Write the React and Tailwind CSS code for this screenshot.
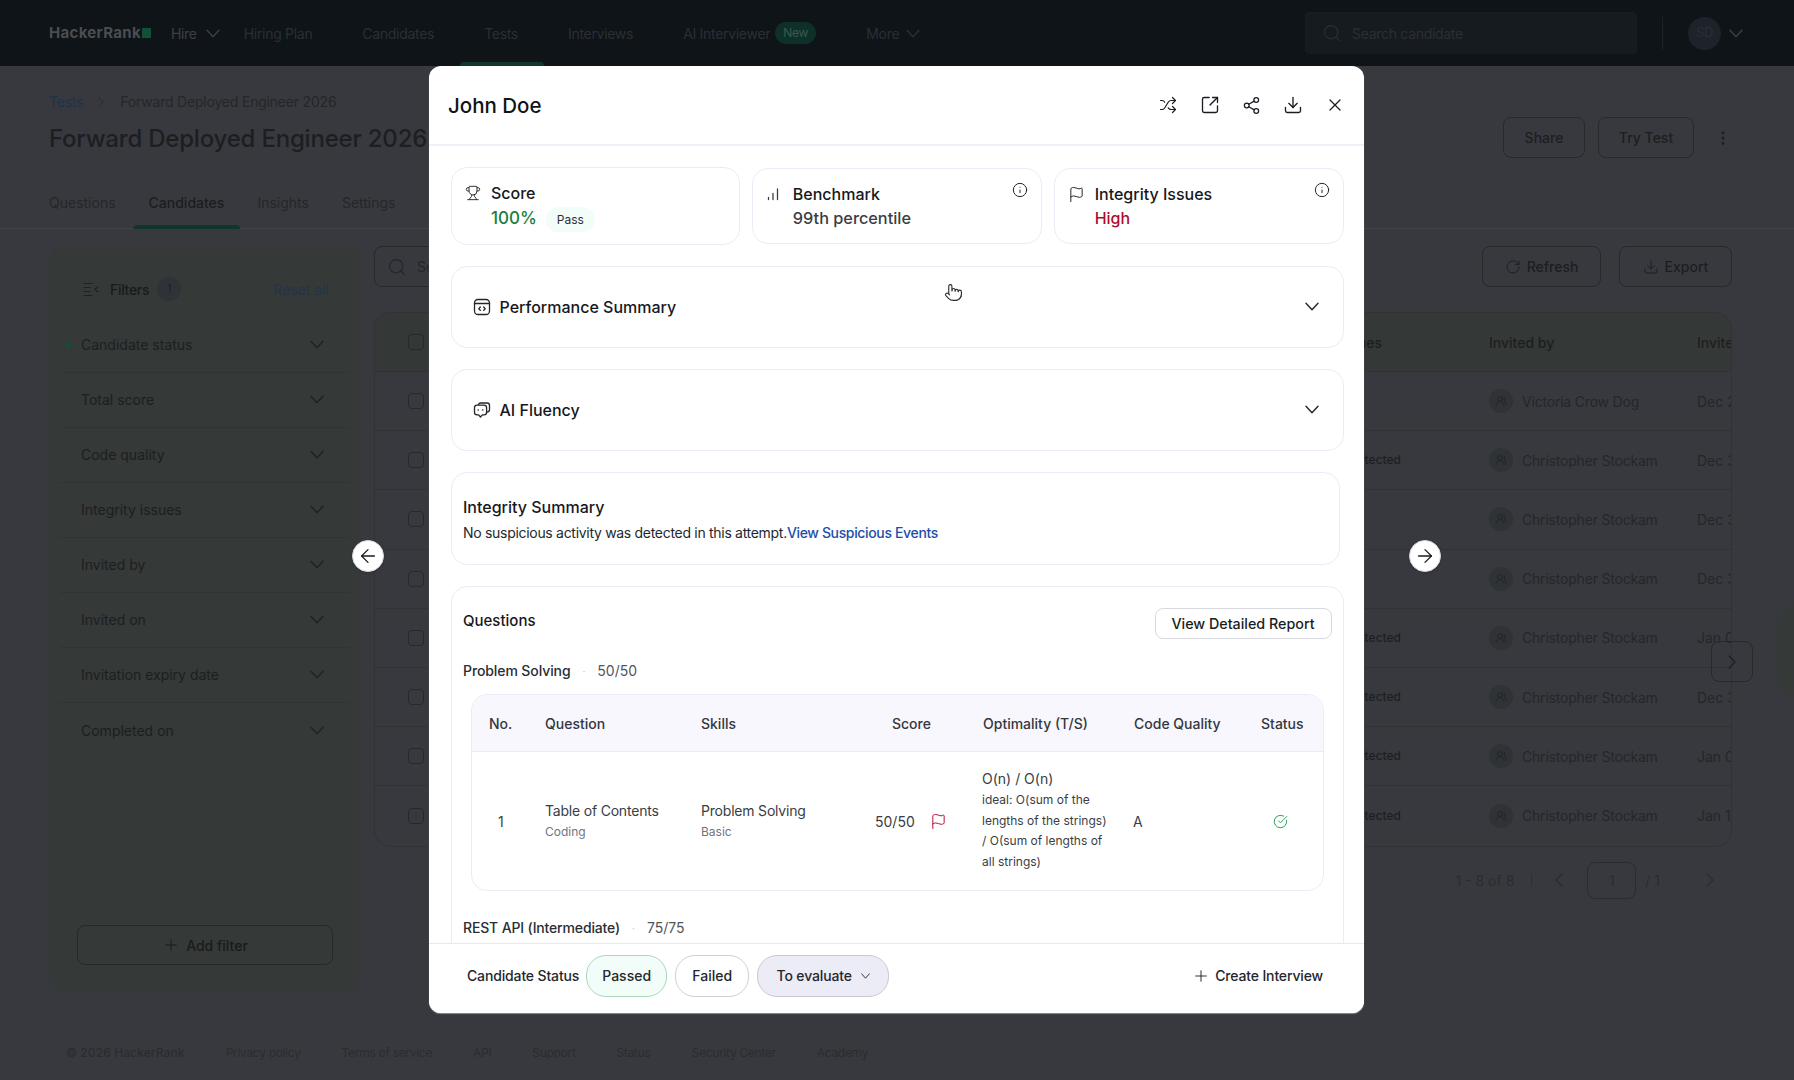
import React from "react";
import {
  ArrowLeft, ArrowRight, ChevronLeft, ChevronRight, Download, EllipsisVertical, Flag, Info,
  Plus, Pointer, RotateCw, Search, Share2, Shuffle, SquareArrowOutUpRight, Trophy, X, CircleCheckBig, UsersRound,
} from "lucide-react";

const nav = ["Hiring Plan", "Candidates", "Tests", "Interviews"];
const filters = ["Candidate status", "Total score", "Code quality", "Integrity issues", "Invited by", "Invited on", "Invitation expiry date", "Completed on"];
const rows = [
  ["", "Victoria Crow Dog", "Dec 28, 2025"],
  ["Not detected", "Christopher Stockam", "Dec 30, 2025"],
  ["", "Christopher Stockam", "Dec 31, 2025"],
  ["", "Christopher Stockam", "Dec 31, 2025"],
  ["Not detected", "Christopher Stockam", "Jan 02, 2026"],
  ["Not detected", "Christopher Stockam", "Dec 31, 2025"],
  ["Not detected", "Christopher Stockam", "Jan 05, 2026"],
  ["Not detected", "Christopher Stockam", "Jan 11, 2026"],
];
const footerLinks = ["Privacy policy", "Terms of service", "API", "Support", "Status", "Security Center", "Academy"];

function Chev({ w = 14, h = 9, className = "" }) {
  return (
    <svg className={`shrink-0 ${className}`} width={w} height={h} viewBox="0 0 14 9" fill="none" stroke="currentColor" strokeWidth="1.4" strokeLinecap="round" strokeLinejoin="round" preserveAspectRatio="none">
      <path d="M1 1.2 7 7.8l6-6.6" />
    </svg>
  );
}

function FilterIcon() {
  return (
    <svg width="16" height="15" viewBox="0 0 16 15" fill="none" stroke="#1f2224" strokeWidth="1.2" strokeLinecap="round" strokeLinejoin="round">
      <path d="M1 1.5h8M1 5.5h6M1 9.5h6M1 13.5h8" />
      <path d="M15 5 11.8 7.5 15 10" />
    </svg>
  );
}

function Btn({ className = "", children }) {
  return (
    <div className={`flex items-center justify-center gap-1.5 rounded-lg border border-[#26282a] text-[14px] font-medium text-[#1c1e20] ${className}`}>
      {children}
    </div>
  );
}

function TopBar() {
  return (
    <header className="flex h-[66px] items-center bg-[#0f1418] pl-[49px] pr-[51px] text-[14px] tracking-[-0.3px] text-[#2a2f35]">
      <div className="flex items-center">
        <span className="text-[15px] font-bold tracking-[0.3px] text-[#4a4e52]">HackerRank</span>
        <span className="ml-[1px] h-[10px] w-[9px] bg-[#12503a]" />
      </div>
      <span className="ml-[20px] text-[#3c4044]">Hire</span>
      <Chev className="ml-[9px] text-[#3c4044]" />
      {nav.map((t, i) => (
        <div key={t} className={`relative flex h-full items-center ${i === 0 ? "ml-[24px]" : "ml-[50px]"}`}>
          {t}
          {t === "Tests" && <span className="absolute bottom-0 -left-[24px] -right-[26px] h-[4px] rounded-t bg-[#10372b]" />}
        </div>
      ))}
      <span className="ml-[50px]">AI Interviewer</span>
      <span className="ml-[5px] flex h-[22px] w-[41px] items-center justify-center rounded-full bg-[#0f2f29] text-[12px] text-[#3a5a4f]">New</span>
      <span className="ml-[50px]">More</span>
      <Chev className="ml-[7px]" />
      <div className="ml-auto flex h-[42px] w-[332px] items-center rounded border border-[#181d22] bg-[#161b20] pl-[16px]">
        <Search size={20} strokeWidth={1.5} />
        <span className="ml-[10px]">Search candidate</span>
      </div>
      <span className="ml-[25px] h-[33px] w-px bg-[#1d2227]" />
      <span className="ml-[25px] flex h-[33px] w-[33px] items-center justify-center rounded-full bg-[#1d232b] text-[13px]">SD</span>
      <Chev className="ml-[8px] text-[#3c4044]" />
    </header>
  );
}

function Background() {
  return (
    <div className="relative flex h-[1080px] w-[1794px] flex-col overflow-hidden bg-[#38393e] font-['Inter',sans-serif]">
      <TopBar />
      <div className="flex items-start justify-between pl-[49px] pr-[62px] pt-[27px]">
        <div>
          <div className="flex items-center text-[14px] leading-[18px] tracking-[-0.2px] text-[#24262a]">
            <span className="text-[#1f3249]">Tests</span>
            <ChevronRight className="ml-[9px] mr-[10px] text-[#26282b]" size={18} strokeWidth={1.3} />
            <span>Forward Deployed Engineer 2026</span>
          </div>
          <h1 className="mt-[12px] text-[24px] font-medium leading-[32px] tracking-[-0.2px] text-[#1c1e21]">Forward Deployed Engineer 2026</h1>
        </div>
        <div className="mt-[24px] flex items-center">
          <Btn className="h-[41px] w-[82px]">Share</Btn>
          <Btn className="ml-[13px] h-[41px] w-[96px]">Try Test</Btn>
          <EllipsisVertical className="ml-[20px] text-[#1c1e20]" size={18} />
        </div>
      </div>
      <div className="mt-[25px] flex h-[46px] border-b border-[#44454a] pl-[49px] text-[14px] text-[#24262a]">
        <span className="pt-[9px]">Questions</span>
        <span className="relative ml-[33px] pt-[9px] font-medium text-[#1b1d20]">
          Candidates
          <span className="absolute bottom-[-1px] -left-[16px] -right-[16px] h-[4px] rounded-t bg-[#10372b]" />
        </span>
        <span className="ml-[33px] pt-[9px]">Insights</span>
        <span className="ml-[33px] pt-[9px]">Settings</span>
      </div>
      <div className="flex gap-[14px] pl-[50px] pr-[62px] pt-[17px]">
        <aside className="flex h-[745px] w-[310px] shrink-0 flex-col rounded-xl bg-[#353937] px-[10px]">
          <div className="mt-[31px] flex h-[24px] items-center pl-[23px] pr-[21px] text-[14px]">
            <FilterIcon />
            <span className="ml-[11px] font-medium tracking-[-0.3px] text-[#191b1d]">Filters</span>
            <span className="ml-[8px] flex h-[24px] w-[24px] items-center justify-center rounded-full bg-[#2f3337] text-[12px] text-[#212427]">1</span>
            <span className="ml-auto text-[#25344a]">Reset all</span>
          </div>
          <div className="mt-[16.5px]">
            {filters.map((f, i) => (
              <div key={f} className={`relative flex h-[55px] items-center pl-[21px] pr-[26px] text-[14px] text-[#1c1f21] ${i < 7 ? "border-b border-[#303436]" : ""}`}>
                {i === 0 && <span className="absolute left-[5px] h-[6px] w-[6px] rounded-full bg-[#1a4a3a]" />}
                <span>{f}</span>
                <Chev className="ml-auto text-[#1f2224]" />
              </div>
            ))}
          </div>
          <Btn className="mx-[17px] mb-[26px] mt-auto h-[40px] border-[#24272a] text-[#191b1d]">
            <Plus size={18} strokeWidth={1.3} /> Add filter
          </Btn>
        </aside>
        <main className="min-w-0 flex-1">
          <div className="flex justify-between">
            <div className="flex h-[41px] w-[300px] items-center rounded-lg border border-[#26282a] pl-[12px] text-[14px] text-[#24262a]">
              <Search size={20} strokeWidth={1.5} />
              <span className="ml-[10px]">Search</span>
            </div>
            <div className="flex gap-[18px]">
              <Btn className="h-[41px] w-[119px]"><RotateCw size={16} strokeWidth={1.5} /> Refresh</Btn>
              <Btn className="h-[41px] w-[113px]"><Download size={16} strokeWidth={1.5} /> Export</Btn>
            </div>
          </div>
          <div className="mt-[25px] overflow-hidden rounded-2xl border border-[#303234]">
            <div className="grid h-[59px] grid-cols-[1114px_208px_1fr] items-center border-b border-[#303234] bg-[#343836] text-[14px] font-medium text-[#1c1f20]">
              <div className="flex items-center justify-between pl-[33px]">
                <span className="h-[16px] w-[16px] rounded border border-[#26292b]" />
                <span className="whitespace-nowrap pr-[107px]">Integrity issues</span>
              </div>
              <span>Invited by</span>
              <span className="overflow-hidden whitespace-nowrap">Invited on</span>
            </div>
            {rows.map((r, i) => (
              <div key={i} className={`grid h-[59.2px] grid-cols-[1114px_208px_1fr] items-center text-[14px] text-[#24262a] ${i < 7 ? "border-b border-[#303234]" : ""}`}>
                <div className="flex items-center justify-between pl-[33px]">
                  <span className="h-[16px] w-[16px] rounded border border-[#26292b]" />
                  <span className="whitespace-nowrap pr-[88px] text-[12px] font-medium text-[#1c1f20]">{r[0]}</span>
                </div>
                <div className="flex items-center">
                  <span className="flex h-[24px] w-[24px] items-center justify-center rounded-full bg-[#2f3335]">
                    <UsersRound className="text-[#1f2224]" size={12} strokeWidth={1.5} />
                  </span>
                  <span className="ml-[9px] whitespace-nowrap tracking-[-0.2px]">{r[1]}</span>
                </div>
                <span className="overflow-hidden whitespace-nowrap">{r[2]}</span>
              </div>
            ))}
          </div>
          <div className="mt-[15px] flex items-center justify-end pr-[10px] text-[14px] text-[#2a2c30]">
            <span>1 - 8 of 8</span>
            <span className="ml-[17px] h-[12px] w-px bg-[#2e3034]" />
            <ChevronLeft className="ml-[15px]" size={24} strokeWidth={1.2} />
            <span className="ml-[16px] flex h-[37px] w-[49px] items-center justify-center rounded-lg border border-[#2a2c30]">1</span>
            <span className="ml-[9px]">/ 1</span>
            <ChevronRight className="ml-[38px]" size={24} strokeWidth={1.2} />
          </div>
        </main>
      </div>
      <footer className="absolute bottom-[19px] left-[66px] flex items-center gap-[41px] text-[12px] leading-[16px] tracking-[-0.3px] text-[#2a2c30]">
        <span className="font-medium tracking-[0.1px]">© 2026 HackerRank</span>
        {footerLinks.map((t) => <span key={t}>{t}</span>)}
      </footer>
      <div className="absolute left-[1711px] top-[641px] flex h-[41px] w-[42px] items-center justify-center rounded-lg border border-[#26282a] text-[#1c1e20]">
        <ChevronRight size={24} strokeWidth={1.2} />
      </div>
      <span className="absolute left-[1776px] top-[600px] h-[100px] w-[60px] rounded-full bg-[#353937]" />
    </div>
  );
}

function CodeCard() {
  return (
    <svg width="18" height="18" viewBox="0 0 18 18" fill="none" stroke="currentColor" strokeWidth="1.3" strokeLinecap="round" strokeLinejoin="round">
      <rect x="1.5" y="1.5" width="15" height="15" rx="3.5" />
      <path d="M1.5 5.5h15" />
      <path d="M7.3 9 5.8 10.7l1.5 1.7M10.7 9l1.5 1.7-1.5 1.7" />
    </svg>
  );
}

function ChatCard() {
  return (
    <svg width="18" height="18" viewBox="0 0 18 18" fill="none" stroke="currentColor" strokeWidth="1.3" strokeLinecap="round" strokeLinejoin="round">
      <path d="M5.5 3.6A2.2 2.2 0 0 1 7.5 2h6.7A2.4 2.4 0 0 1 16.5 4.4v4.4a2.2 2.2 0 0 1-2 2.2" />
      <path d="M4 4.2h7a2.6 2.6 0 0 1 2.6 2.6v4.4A2.6 2.6 0 0 1 11 13.8H9.4L7.5 16l-1.9-2.2H4a2.6 2.6 0 0 1-2.5-2.6V6.8A2.6 2.6 0 0 1 4 4.2Z" />
      <path d="M5.2 9h.01M9.8 9h.01" strokeWidth="1.6" />
    </svg>
  );
}

function Bars() {
  return (
    <svg width="14" height="14" viewBox="0 0 14 14" fill="none" stroke="#3b3f46" strokeWidth="1.3" strokeLinecap="round">
      <path d="M2.5 12.5v-2M7 12.5V6.5M11.5 12.5V2" />
    </svg>
  );
}

function Pane({ className = "", children }) {
  return <section className={`rounded-2xl border border-[#ebebf6] bg-white ${className}`}>{children}</section>;
}

function StatCard({ icon, label, children, info, className = "" }) {
  return (
    <Pane className={`relative flex items-start pl-[13px] pt-[13px] ${className}`}>
      <span className="flex h-[24px] w-[26.5px] items-center text-[#23262b]">{icon}</span>
      <div>
        <div className="text-[16px] font-medium leading-[24px] text-[#16181c]">{label}</div>
        {children}
      </div>
      {info && <Info className="absolute right-[13px] top-[13px] text-[#23262b]" size={16} strokeWidth={1.5} />}
    </Pane>
  );
}

function Accordion({ icon, title, className = "" }) {
  return (
    <Pane className={`flex items-center pl-[21px] pr-[24px] ${className}`}>
      <span className="text-[#23262b]">{icon}</span>
      <span className="ml-[9px] text-[16px] font-medium text-[#16181c]">{title}</span>
      <Chev className="ml-auto text-[#23262b]" />
    </Pane>
  );
}

function QuestionTable() {
  return (
    <div className="mx-[8px] mt-[13px] overflow-hidden rounded-2xl border border-[#ebebf6]">
      <div className="grid h-[57px] grid-cols-[56px_156px_191px_91px_151px_127px_1fr] items-center border-b border-[#ebebf6] bg-[#f7f7fd] pl-[17px] text-[14px] font-medium text-[#34373d]">
        <span>No.</span>
        <span>Question</span>
        <span>Skills</span>
        <span>Score</span>
        <span>Optimality (T/S)</span>
        <span>Code Quality</span>
        <span>Status</span>
      </div>
      <div className="grid h-[138px] grid-cols-[56px_156px_174px_75px_151px_127px_1fr] items-center pl-[17px] text-[14px] text-[#3a3d44]">
        <span className="pl-[9px]">1</span>
        <div className="leading-[21px]">
          <div className="tracking-[-0.2px]">Table of Contents</div>
          <div className="text-[12px] text-[#72757c]">Coding</div>
        </div>
        <div className="leading-[21px]">
          <div className="tracking-[-0.2px]">Problem Solving</div>
          <div className="text-[12px] text-[#72757c]">Basic</div>
        </div>
        <div className="flex items-center gap-[15px]">
          <span>50/50</span>
          <Flag className="text-[#b3122f]" size={17} strokeWidth={1.4} />
        </div>
        <div className="ml-[32px] w-[130px] text-[12px] leading-[20.7px]">
          <div className="text-[14px]">O(n) / O(n)</div>
          <div>ideal: O(sum of the lengths of the strings) / O(sum of lengths of all strings)</div>
        </div>
        <span className="ml-[32px]">A</span>
        <CircleCheckBig className="ml-[45px] text-[#1b9a53]" size={15} strokeWidth={1.5} />
      </div>
    </div>
  );
}

function Modal() {
  const hdr = "flex w-[20px] justify-center";
  return (
    <div className="absolute left-[429px] top-[66px] flex h-[947px] w-[935px] flex-col overflow-hidden rounded-xl bg-white font-['Inter',sans-serif] shadow-[0_1px_1px_rgba(200,200,205,0.6)]">
      <div className="flex h-[80px] shrink-0 items-center border-b-2 border-[#f0f0f8] pl-[19px] pr-[19px]">
        <h2 className="pt-[3px] text-[20.5px] font-medium text-[#111317]">John Doe</h2>
        <div className="ml-auto flex items-center gap-[21.7px] text-[#1b1d22]">
          <span className={hdr}><Shuffle size={18} strokeWidth={1.6} /></span>
          <span className={hdr}><SquareArrowOutUpRight size={20} strokeWidth={1.6} /></span>
          <span className={hdr}><Share2 size={19} strokeWidth={1.6} /></span>
          <span className={hdr}><Download size={20} strokeWidth={1.6} /></span>
          <span className={hdr}><X size={22} strokeWidth={1.5} /></span>
        </div>
      </div>
      <div className="min-h-0 flex-1 overflow-hidden pl-[21.5px] pr-[20px] pt-[22px]">
        <div className="grid h-[76px] grid-cols-3 gap-[12px]">
          <StatCard className="-my-px" icon={<Trophy size={16} strokeWidth={1.4} />} label="Score">
            <div className="flex items-center">
              <span className="text-[17px] font-medium leading-[25px] text-[#1a7f3c]">100%</span>
              <span className="ml-[9px] mt-[2px] flex h-[25px] w-[49px] items-center justify-center rounded-xl bg-[#f2fcf8] text-[12px] text-[#2c3036]">Pass</span>
            </div>
          </StatCard>
          <StatCard icon={<Bars />} label="Benchmark" info>
            <div className="text-[16.3px] font-medium leading-[25px] text-[#3a3d44]">99th percentile</div>
          </StatCard>
          <StatCard icon={<Flag size={17} strokeWidth={1.4} />} label="Integrity Issues" info>
            <div className="text-[16px] font-medium leading-[25px] text-[#ad0b2b]">High</div>
          </StatCard>
        </div>
        <Accordion className="mt-[22px] h-[82px] pb-[1px]" icon={<CodeCard />} title="Performance Summary" />
        <Accordion className="mt-[20.5px] h-[82.5px]" icon={<ChatCard />} title="AI Fluency" />
        <Pane className="mr-[4.5px] mt-[21px] h-[93px] pl-[11.5px] pt-[22px]">
          <h3 className="text-[16px] font-medium leading-[24px] text-[#16181c]">Integrity Summary</h3>
          <p className="mt-[4px] text-[14px] leading-[20px] tracking-[-0.3px] text-[#24272c]">
            No suspicious activity was detected in this attempt.
            <span className="font-medium tracking-[-0.35px] text-[#1d4ea8]">View Suspicious Events</span>
          </p>
        </Pane>
        <Pane className="mt-[21px] px-[11.5px] pb-[40px] pt-[20px]">
          <div className="flex items-start justify-between">
            <h3 className="mt-[2px] text-[15px] font-medium leading-[24px] text-[#16181c]">Questions</h3>
            <span className="mt-[1px] flex h-[31px] w-[177px] items-center justify-center rounded-lg border border-[#d9d9e2] text-[14.3px] font-medium text-[#1b1d22]">View Detailed Report</span>
          </div>
          <div className="mt-[22px] flex items-center text-[14px] leading-[20px]">
            <span className="font-medium tracking-[-0.1px] text-[#2a2d33]">Problem Solving</span>
            <span className="ml-[12px] text-[10px] text-[#c0c1c8]">·</span>
            <span className="ml-[12px] text-[#52555c]">50/50</span>
          </div>
          <QuestionTable />
          <div className="mt-[27px] flex items-center text-[14px] leading-[20px]">
            <span className="font-medium tracking-[-0.15px] text-[#2a2d33]">REST API (Intermediate)</span>
            <span className="ml-[12px] text-[10px] text-[#c0c1c8]">·</span>
            <span className="ml-[12px] text-[#52555c]">75/75</span>
          </div>
        </Pane>
      </div>
      <div className="flex h-[70px] shrink-0 items-center border-t border-[#e8e8f0] bg-white pb-[6px] pl-[38px] pr-[41px] text-[14px] font-medium text-[#24272c]">
        <span className="tracking-[-0.15px]">Candidate Status</span>
        <span className="ml-[7px] flex h-[42px] w-[81px] items-center justify-center rounded-[20px] border border-[#a9d8b8] bg-[#f2fcf8]">Passed</span>
        <span className="ml-[8px] flex h-[42px] w-[74px] items-center justify-center rounded-[20px] border border-[#cfcfda]">Failed</span>
        <span className="ml-[8px] flex h-[42px] w-[132px] items-center justify-center gap-[9px] rounded-[20px] border border-[#c9c9d6] bg-[#ececf6] tracking-[-0.15px]">
          To evaluate
          <Chev w={9} h={6} />
        </span>
        <span className="ml-auto flex items-center gap-[5px] tracking-[-0.15px]">
          <Plus size={18} strokeWidth={1.3} />
          Create Interview
        </span>
      </div>
    </div>
  );
}

function NavCircle({ className, children }) {
  return (
    <span className={`absolute top-[540px] flex h-[32px] w-[32px] items-center justify-center rounded-full border border-[#d5d5de] bg-white text-[#1b1d22] shadow-sm ${className}`}>
      {children}
    </span>
  );
}

export default function App() {
  return (
    <div className="relative h-[1080px] w-[1794px] overflow-hidden">
      <Background />
      <Modal />
      <NavCircle className="left-[352px]"><ArrowLeft size={22} strokeWidth={1.4} /></NavCircle>
      <NavCircle className="left-[1409px]"><ArrowRight size={22} strokeWidth={1.4} /></NavCircle>
      <Pointer className="absolute left-[944px] top-[283px] fill-white text-[#2b2b2b]" size={19} strokeWidth={1.4} />
    </div>
  );
}
